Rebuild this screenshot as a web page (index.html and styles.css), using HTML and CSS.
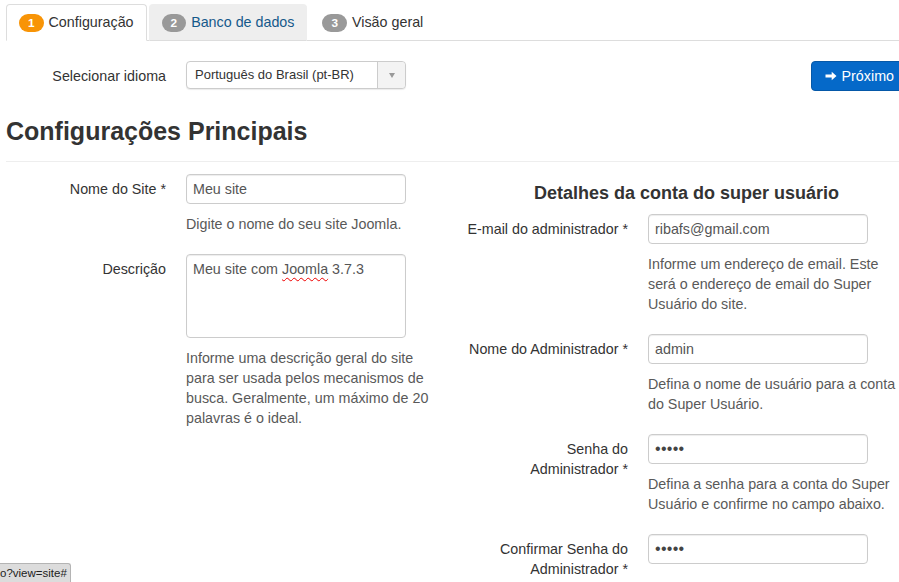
FILE: index.html
```html
<!DOCTYPE html>
<html lang="pt-BR">
<head>
<meta charset="utf-8">
<title>Instalação Joomla</title>
<link rel="stylesheet" href="styles.css">
</head>
<body>
<div class="page">
  <ul class="tabs">
    <li class="tab active"><span class="badge badge-warning">1</span> Configuração</li>
    <li class="tab hover"><span class="badge">2</span> <a href="#">Banco de dados</a></li>
    <li class="tab"><span class="badge">3</span> Visão geral</li>
  </ul>

  <div class="lang-row">
    <div class="lang-group">
      <label class="control-label">Selecionar idioma</label>
      <div class="select">
        <span class="select-text">Português do Brasil (pt-BR)</span>
        <span class="select-arrow"><span class="caret"></span></span>
      </div>
    </div>
    <button class="btn-next" type="button">
      <svg class="arrow" width="12" height="12" viewBox="0 0 12 12" aria-hidden="true"><path d="M0.5 4.6h6.2V1.8L11.5 6l-4.8 4.2V7.4H0.5z" fill="#fff"/></svg>
      Próximo
    </button>
  </div>

  <h3 class="section-title">Configurações Principais</h3>
  <hr class="divider">

  <div class="columns">
    <div class="col">
      <div class="control-group">
        <label class="control-label">Nome do Site *</label>
        <div class="controls">
          <input class="input" type="text" value="Meu site">
          <p class="help">Digite o nome do seu site Joomla.</p>
        </div>
      </div>
      <div class="control-group">
        <label class="control-label">Descrição</label>
        <div class="controls">
          <div class="textarea">Meu site com <span class="misspelled">Joomla</span> 3.7.3</div>
          <p class="help">Informe uma descrição geral do site para ser usada pelos mecanismos de busca. Geralmente, um máximo de 20 palavras é o ideal.</p>
        </div>
      </div>
    </div>

    <div class="col">
      <h4 class="sub-title">Detalhes da conta do super usuário</h4>
      <div class="control-group">
        <label class="control-label nowrap">E-mail do administrador *</label>
        <div class="controls">
          <input class="input" type="text" value="ribafs@gmail.com">
          <p class="help">Informe um endereço de email. Este será o endereço de email do Super Usuário do site.</p>
        </div>
      </div>
      <div class="control-group">
        <label class="control-label nowrap">Nome do Administrador *</label>
        <div class="controls">
          <input class="input" type="text" value="admin">
          <p class="help">Defina o nome de usuário para a conta do Super Usuário.</p>
        </div>
      </div>
      <div class="control-group">
        <label class="control-label">Senha do<br>Administrador *</label>
        <div class="controls">
          <input class="input password" type="password" value="admin">
          <p class="help">Defina a senha para a conta do Super Usuário e confirme no campo abaixo.</p>
        </div>
      </div>
      <div class="control-group">
        <label class="control-label">Confirmar Senha do<br>Administrador *</label>
        <div class="controls">
          <input class="input password" type="password" value="admin">
        </div>
      </div>
    </div>
  </div>
</div>
<div class="statusbar">o?view=site#</div>
</body>
</html>
```

FILE: styles.css
```css
html, body {
  margin: 0;
  padding: 0;
  overflow: hidden;
  background: #fff;
}
body {
  font-family: "Liberation Sans", Arial, sans-serif;
  font-size: 14.3px;
  line-height: 20px;
  color: #333;
}
.page {
  width: 905px;
  padding-left: 6px;
}

/* Tabs */
.tabs {
  list-style: none;
  margin: 0;
  padding: 4px 0 0 0;
  display: flex;
  border-bottom: 1px solid #ddd;
}
.tab {
  padding: 8px 12px;
  margin-right: 2px;
  margin-bottom: -1px;
  border: 1px solid transparent;
  border-radius: 4px 4px 0 0;
  line-height: 18px;
  color: #333;
  white-space: nowrap;
}
.tab.active {
  background: #fff;
  border-color: #ddd;
  border-bottom-color: #fff;
}
.tab.hover {
  background: #eee;
  border-color: #eee #eee #ddd;
}
.tab a {
  color: #15598a;
  text-decoration: none;
}
.badge {
  display: inline-block;
  padding: 2px 9px;
  font-size: 11.8px;
  font-weight: bold;
  line-height: 14px;
  color: #fff;
  background: #999;
  border-radius: 9px;
  vertical-align: baseline;
  margin-right: 1px;
}
.badge-warning {
  background: #f89406;
}

/* Language row */
.lang-row {
  display: flex;
  justify-content: space-between;
  align-items: flex-start;
  margin-top: 20px;
}
.lang-group {
  display: flex;
}
.control-label {
  width: 160px;
  flex: 0 0 160px;
  text-align: right;
  padding-top: 5px;
  margin-right: 20px;
  color: #333;
}
.control-label.nowrap {
  white-space: nowrap;
  display: flex;
  justify-content: flex-end;
}
.select {
  width: 218px;
  height: 26px;
  border: 1px solid #ccc;
  border-radius: 4px;
  background: #fff;
  display: flex;
  box-shadow: 0 1px 1px rgba(0,0,0,0.08);
  font-size: 13px;
  line-height: 26px;
  color: #333;
}
.select-text {
  flex: 1;
  padding-left: 8px;
}
.select-arrow {
  width: 27px;
  border-left: 1px solid #ccc;
  background: #f3f3f3;
  border-radius: 0 4px 4px 0;
  display: flex;
  align-items: center;
  justify-content: center;
}
.caret {
  width: 0;
  height: 0;
  border-left: 3.5px solid transparent;
  border-right: 3.5px solid transparent;
  border-top: 5px solid #999;
}
.btn-next {
  font-family: inherit;
  font-size: 14.3px;
  line-height: 20px;
  color: #fff;
  background: #0569c9;
  border: 1px solid #0558a8;
  border-radius: 4px;
  padding: 4px 16px 4px 13px;
  height: 30px;
  display: flex;
  align-items: center;
  gap: 5px;
}
.arrow {
  display: block;
}

/* Heading */
.section-title {
  font-size: 25px;
  line-height: 40px;
  font-weight: bold;
  margin: 20px 0 0 0;
  color: #333;
}
.divider {
  border: 0;
  border-top: 1px solid #eee;
  margin: 10px 0 12px 0;
}

/* Columns */
.columns {
  display: grid;
  grid-template-columns: 443px 443px;
  column-gap: 19px;
}
.sub-title {
  font-size: 18px;
  line-height: 20px;
  font-weight: bold;
  text-align: center;
  margin: 9px 0 11px 0;
  padding-right: 6px;
  color: #333;
}
.control-group {
  display: flex;
  margin-bottom: 20px;
}
.controls {
  flex: 1;
}
.input {
  display: block;
  box-sizing: border-box;
  width: 220px;
  height: 30px;
  padding: 4px 6px;
  font-family: inherit;
  font-size: 14.3px;
  line-height: 20px;
  color: #555;
  border: 1px solid #ccc;
  border-radius: 4px;
  box-shadow: inset 0 1px 1px rgba(0,0,0,0.075);
  background: #fff;
  margin: 0;
}
.input.password {
  font-size: 16px;
  letter-spacing: 0.3px;
  color: #444;
}
.textarea {
  box-sizing: border-box;
  width: 220px;
  height: 84px;
  padding: 4px 6px;
  color: #555;
  border: 1px solid #ccc;
  border-radius: 4px;
  box-shadow: inset 0 1px 1px rgba(0,0,0,0.075);
}
.misspelled {
  text-decoration: underline wavy #e00;
  text-decoration-thickness: 1px;
  text-underline-offset: 3px;
}
.help {
  margin: 10px 0 0 0;
  width: 255px;
  color: #595959;
}

/* Status bar */
.statusbar {
  position: fixed;
  left: 0;
  bottom: 0;
  padding: 1px 3px 1px 0;
  font-family: "Liberation Sans", Arial, sans-serif;
  font-size: 11.5px;
  line-height: 16px;
  color: #222;
  background: #dcdcdc;
  border-top: 1px solid #b4b4b4;
  border-right: 1px solid #b4b4b4;
  border-radius: 0 3px 0 0;
}
```
